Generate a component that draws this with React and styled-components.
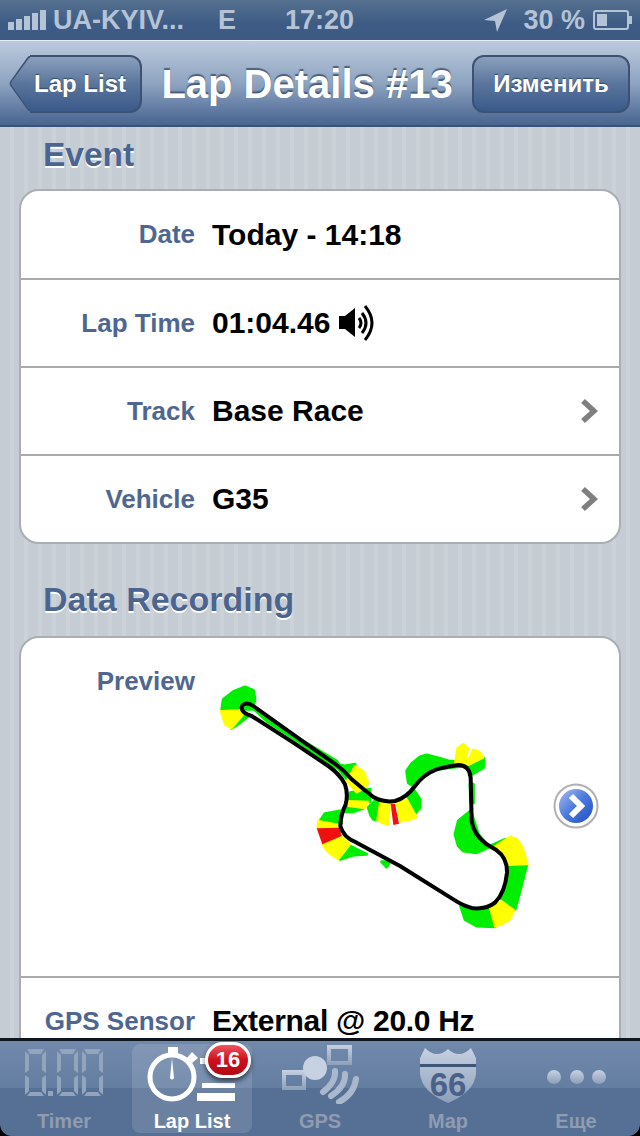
import React from 'react'
import styled, { createGlobalStyle } from 'styled-components'

const Global = createGlobalStyle`
  html, body { margin: 0; padding: 0; background: #000; }
  body { font-family: "Liberation Sans", Arial, sans-serif; }
`

const Shell = styled.div`
  width: 640px;
  height: 1136px;
  display: flex;
  flex-direction: column;
  overflow: hidden;
`

const StatusBar = styled.div`
  height: 40px;
  flex: none;
  display: flex;
  align-items: center;
  padding: 0 7px 0 8px;
  box-sizing: border-box;
  background: linear-gradient(#55708f, #3d5b84 60%, #3c5a82);
  color: #b5c3d6;
  font-size: 27px;
  font-weight: bold;
`

const Signal = styled.div`
  display: flex;
  align-items: flex-end;
  gap: 2px;
  height: 20px;
  margin-right: 7px;
`

const Bar = styled.span`
  width: 6px;
  height: ${p => p.$h}px;
  background: #b5c3d6;
`

const StatusText = styled.span`
  margin-left: ${p => p.$ml || 0}px;
  white-space: nowrap;
`

const Spacer = styled.div`
  flex: 1;
`

const NavBar = styled.div`
  height: 87px;
  flex: none;
  box-sizing: border-box;
  display: flex;
  align-items: center;
  padding: 0 10px;
  border-top: 1px solid #e6ecf3;
  border-bottom: 2px solid #39527a;
  background: linear-gradient(#bccbde, #8ea4c0 50%, #55709a 90%, #4a668f);
`

const NavButtonBody = `
  background: linear-gradient(#8a9fbc, #5a759c 50%, #3a5a8a);
  border: 2px solid #3b5273;
  box-sizing: border-box;
`

const BackButton = styled.div`
  position: relative;
  isolation: isolate;
  width: 132px;
  height: 58px;
  margin-top: 1px;
  display: flex;
  align-items: center;
  justify-content: flex-end;
  padding-right: 16px;
  box-sizing: border-box;
  color: #fff;
  font-size: 24px;
  font-weight: bold;
  text-shadow: 0 -1px 1px rgba(30, 50, 80, 0.7);

  &::before {
    content: '';
    position: absolute;
    z-index: -1;
    left: -1px;
    top: 8px;
    width: 41px;
    height: 41px;
    border-radius: 4px;
    transform: scaleX(0.72) rotate(45deg);
    background: linear-gradient(135deg, #8a9fbc, #5a759c 50%, #3a5a8a);
    border: 2px solid #3b5273;
    box-sizing: border-box;
  }

  &::after {
    content: '';
    position: absolute;
    z-index: -1;
    inset: 0 0 0 20px;
    border-radius: 0 12px 12px 0;
    ${NavButtonBody}
    border-left: 0;
  }
`

const NavTitle = styled.div`
  flex: 1;
  text-align: center;
  padding-top: 2px;
  color: #fff;
  font-size: 40px;
  font-weight: bold;
  white-space: nowrap;
  text-shadow: 0 -2px 1px rgba(50, 70, 100, 0.75);
`

const EditButton = styled.div`
  ${NavButtonBody}
  width: 158px;
  height: 58px;
  margin-top: 1px;
  border-radius: 12px;
  display: flex;
  align-items: center;
  justify-content: center;
  color: #fff;
  font-size: 24px;
  font-weight: bold;
  text-shadow: 0 -1px 1px rgba(30, 50, 80, 0.7);
`

const Content = styled.div`
  flex: 1;
  min-height: 0;
  overflow: hidden;
  padding: 0 19px;
  background: repeating-linear-gradient(90deg, #c5ccd4 0 10px, #cbd2d8 10px 14px);
`

const SectionTitle = styled.div`
  height: 55px;
  line-height: 55px;
  margin: ${p => p.$first ? '0 0 7px' : '28px 0 9px'};
  padding-left: 24px;
  color: #4c6590;
  font-size: ${p => p.$first ? 33.5 : 34}px;
  font-weight: bold;
  text-shadow: 0 2px 0 #fff;
`

const Card = styled.div`
  background: #fff;
  border: 2px solid #aaaeb2;
  border-radius: 20px;
  overflow: hidden;
`

const Row = styled.div`
  height: ${p => p.$h || 88}px;
  box-sizing: border-box;
  display: flex;
  align-items: ${p => p.$top ? 'flex-start' : 'center'};
  border-top: ${p => p.$first ? 'none' : '2px solid #aaa'};
`

const Label = styled.div`
  width: 174px;
  flex: none;
  text-align: right;
  color: #4f6790;
  font-size: 26px;
  font-weight: bold;
  white-space: nowrap;
  padding-top: ${p => p.$pt || 0}px;
`

const Value = styled.div`
  margin-left: 17px;
  flex: 1;
  display: flex;
  align-items: center;
  gap: 9px;
  color: #000;
  font-size: 30px;
  font-weight: bold;
  letter-spacing: ${p => p.$ls || 0}px;
  white-space: nowrap;
`

const Chevron = styled.svg`
  width: 18px;
  height: 26px;
  flex: none;
  margin-right: 21px;
`

const PreviewWrap = styled.div`
  margin: 33px 0 0 5px;
  display: flex;
  flex: none;
`

const InfoButton = styled.svg`
  width: 46px;
  height: 46px;
  flex: none;
  align-self: center;
  margin-left: 3px;
`

const TabBar = styled.div`
  height: 98px;
  flex: none;
  box-sizing: border-box;
  display: grid;
  grid-template-columns: repeat(5, 128px);
  border-top: 3px solid #10161f;
  border-radius: 0 0 12px 12px;
  background: linear-gradient(#7189ab, #647ea2 49%, #566f94 50%, #566f94);
`

const Tab = styled.div`
  position: relative;
  margin: 3px 4px 4px;
  display: flex;
  flex-direction: column;
  align-items: center;
  border-radius: 8px;
  background: ${p => p.$active ? 'rgba(255, 255, 255, 0.13)' : 'transparent'};
`

const TabIcon = styled.svg`
  width: 120px;
  height: 60px;
  flex: none;
`

const TabLabel = styled.div`
  margin-top: 5px;
  color: ${p => p.$active ? '#fff' : '#8f9cb1'};
  font-size: 20px;
  font-weight: bold;
  line-height: 24px;
`

const Badge = styled.div`
  position: absolute;
  top: -2px;
  left: 73px;
  width: 46px;
  height: 36px;
  box-sizing: border-box;
  display: flex;
  align-items: center;
  justify-content: center;
  border: 3px solid #fff;
  border-radius: 18px;
  background: linear-gradient(#ef5560, #cf0f1c 50%, #b00a14);
  box-shadow: 0 3px 5px rgba(0, 0, 0, 0.6);
  color: #fff;
  font-size: 22px;
  font-weight: bold;
`

const ChevronIcon = () => (
  <Chevron viewBox="0 0 18 26">
    <path d="M3 3 L14 13 L3 23" fill="none" stroke="#7f7f7f" strokeWidth="5.5" />
  </Chevron>
)

const Speaker = () => (
  <svg width="36" height="36" viewBox="0 0 36 36">
    <path d="M0 11 H6 L16 3 V32 L6 24 H0 Z" fill="#000" />
    <path d="M20 13 Q24 18 20 23" fill="none" stroke="#000" strokeWidth="3" />
    <path d="M23 8 Q31 18 23 28" fill="none" stroke="#000" strokeWidth="3" />
    <path d="M26 1 Q40 18 26 35" fill="none" stroke="#000" strokeWidth="3" />
  </svg>
)

const GREEN = [
  '70,85 100,62 135,48 160,58 165,85 158,115 130,115 65,118',
  '95,172 130,130 145,135 120,155',
  '160,112 200,135 300,205 410,270 430,300 400,285 300,215 200,150',
  '405,280 435,285 465,280 470,300 445,330',
  '450,365 510,355 510,392 445,388',
  '440,405 490,412 460,422 432,422',
  '530,385 505,410 512,432 520,445 537,447 545,395',
  '625,380 640,355 660,385 660,410 648,425',
  '625,335 620,300 635,278 660,258 680,252 720,262 745,270 770,272 790,285 710,295 670,315 640,345',
  '785,225 800,232 795,278 782,275',
  '805,285 852,262 850,290 815,310',
  '810,340 820,340 820,395 812,390',
  '812,420 775,450 765,490 775,525 790,540 830,545 868,528 835,490',
  '870,525 915,505 905,550',
  '925,582 980,582 965,640 945,715 905,685 920,640',
  '870,712 885,767 830,765 795,745 782,705 830,715',
  '360,450 375,428 420,420 425,455',
  '420,565 450,525 500,550 460,552',
  '545,572 570,572 560,588'
]

const YELLOW = [
  '62,120 120,118 130,130 95,172 75,160',
  '465,285 490,300 505,335 495,350 470,365 440,330',
  '445,390 505,392 495,412 445,405',
  '540,395 570,398 565,460 548,457 532,447',
  '590,395 620,385 650,438 625,448 600,452',
  '765,275 772,232 790,218 805,232 795,278',
  '800,278 820,235 838,242 850,260 805,282',
  '880,530 930,497 950,503 968,530 983,580 925,582 905,550',
  '905,690 943,718 930,745 905,760 885,767 870,710',
  '355,450 420,462 418,470 352,470',
  '367,520 425,497 450,520 415,565 385,545'
]

const RED = [
  '350,472 418,470 425,495 367,520',
  '572,398 585,398 597,458 580,462'
]

const TRACK = `M130 101 Q142 92 160 105 L300 205 L400 275 Q430 295 455 325 Q490 355 520 378
  Q550 395 585 390 Q620 380 645 345 Q670 310 710 295 Q750 285 775 282 Q808 282 812 320
  L815 450 Q820 490 860 520 L890 538 Q922 560 921 605 Q915 665 885 695 Q860 715 820 712
  Q790 705 760 685 L600 585 L470 515 Q430 500 421 465 Q422 430 437 400 Q445 370 435 340
  Q420 310 385 285 L280 215 L155 135 Q125 125 125 110 Q125 105 130 101 Z`

const TrackMap = () => (
  <svg width="350" height="270" viewBox="0 0 1050 810">
    {GREEN.map(p => <polygon key={p} points={p} fill="#00ee00" stroke="#00ee00" strokeWidth="9" strokeLinejoin="round" />)}
    {YELLOW.map(p => <polygon key={p} points={p} fill="#ffff00" stroke="#ffff00" strokeWidth="6" strokeLinejoin="round" />)}
    {RED.map(p => <polygon key={p} points={p} fill="#f01010" />)}
    <path d={TRACK} fill="none" stroke="#000" strokeWidth="12" strokeLinejoin="round" />
  </svg>
)

const Info = () => (
  <InfoButton viewBox="0 0 46 46">
    <defs>
      <linearGradient id="infoBlue" x1="0" y1="0" x2="1" y2="1">
        <stop offset="0" stopColor="#a8bdf0" />
        <stop offset="0.5" stopColor="#4a78dc" />
        <stop offset="1" stopColor="#1f4fc4" />
      </linearGradient>
    </defs>
    <circle cx="23" cy="23" r="21.5" fill="#fff" stroke="#b0b0b4" strokeWidth="2" />
    <circle cx="23" cy="23" r="17" fill="url(#infoBlue)" />
    <path d="M18 13 L28 23 L18 33" fill="none" stroke="#fff" strokeWidth="6" />
  </InfoButton>
)

const ICON_TOP = '#c6d1e1'

const IconGradient = ({ id }) => (
  <defs>
    <linearGradient id={id} x1="0" y1="0" x2="0" y2="1">
      <stop offset="0" stopColor={ICON_TOP} />
      <stop offset="1" stopColor="#8d9fba" />
    </linearGradient>
  </defs>
)

const Digit = ({ x }) => (
  <g transform={`translate(${x} 0)`} fill="#93a4bd">
    <path d="M2 0 H19 L16 5 H5 Z" />
    <path d="M0 2 L4 6 V21 L0 24 Z" />
    <path d="M21 2 L17 6 V21 L21 24 Z" />
    <path d="M0 26 L4 29 V42 L0 46 Z" />
    <path d="M21 26 L17 29 V42 L21 46 Z" />
    <path d="M5 43 H16 L19 47 H2 Z" />
  </g>
)

const TimerIcon = () => (
  <TabIcon viewBox="0 0 120 60">
    <g transform="translate(21 5)">
      <Digit x={0} />
      <rect x="23" y="42" width="5" height="5" fill="#93a4bd" />
      <Digit x={32} />
      <Digit x={57} />
    </g>
  </TabIcon>
)

const LapListIcon = () => (
  <TabIcon viewBox="0 0 120 60">
    <circle cx="40" cy="33" r="22" fill="none" stroke="#fff" strokeWidth="5" />
    <rect x="36" y="3" width="10" height="9" fill="#fff" />
    <path d="M60 8 L66 14 L60 19 L55 14 Z" fill="#fff" />
    <path d="M38 34 L40 14 L42 34 Q40 37 38 34 Z" fill="#fff" />
    <rect x="68" y="14" width="8" height="6" fill="#fff" />
    <rect x="70" y="39" width="33" height="5" fill="#fff" />
    <rect x="65" y="49" width="38" height="8" fill="#fff" />
  </TabIcon>
)

const GpsIcon = () => (
  <TabIcon viewBox="0 0 120 60">
    <IconGradient id="gpsFill" />
    <path fillRule="evenodd" d="M22 26 H46 V46 H22 Z M26 31 V42 H42 V31 Z" fill="url(#gpsFill)" />
    <circle cx="55" cy="24" r="12" fill={ICON_TOP} />
    <path fillRule="evenodd" d="M67 1 H92 V21 H67 Z M71 5 V17 H88 V5 Z" fill="url(#gpsFill)" />
    <g fill="none" stroke="#a9b8cd" strokeWidth="6" strokeLinecap="round">
      <path d="M75 27 Q76 38 63 48" />
      <path d="M85 30 Q86 42 71 52" />
      <path d="M96 35 Q94 50 79 58" />
    </g>
  </TabIcon>
)

const MapIcon = () => (
  <TabIcon viewBox="0 0 120 60">
    <IconGradient id="mapFill" />
    <path d="M37 4 Q43 10 49 10 Q55 10 60 5 Q65 10 71 10 Q77 10 83 4 L88 14 V30 Q86 48 60 59 Q34 48 32 30 V14 Z" fill="url(#mapFill)" />
    <rect x="32" y="20" width="56" height="3" fill="#3f5679" />
    <text x="60" y="52" textAnchor="middle" fontFamily="Liberation Sans, sans-serif" fontWeight="bold" fontSize="33" fill="#4a6288">66</text>
  </TabIcon>
)

const MoreIcon = () => (
  <TabIcon viewBox="0 0 120 60">
    <IconGradient id="moreFill" />
    <circle cx="38" cy="33" r="7" fill="url(#moreFill)" />
    <circle cx="61" cy="33" r="7" fill="url(#moreFill)" />
    <circle cx="83" cy="33" r="7" fill="url(#moreFill)" />
  </TabIcon>
)

export default function App() {
  return (
    <Shell>
      <Global />
      <StatusBar>
        <Signal>
          <Bar $h={8} />
          <Bar $h={11} />
          <Bar $h={14} />
          <Bar $h={17} />
          <Bar $h={20} />
        </Signal>
        <StatusText>UA-KYIV...</StatusText>
        <StatusText $ml={34}>E</StatusText>
        <StatusText $ml={49}>17:20</StatusText>
        <Spacer />
        <svg width="24" height="24" viewBox="0 0 24 24">
          <path d="M23 1 L0 12 L11 13 L13 24 Z" fill="#b5c3d6" />
        </svg>
        <StatusText $ml={15}>30 %</StatusText>
        <svg style={{ marginLeft: 8 }} width="40" height="20" viewBox="0 0 40 20">
          <rect x="1" y="1" width="34" height="18" rx="2" fill="none" stroke="#b5c3d6" strokeWidth="2" />
          <rect x="4" y="4" width="10" height="12" fill="#b5c3d6" />
          <rect x="36" y="6" width="3" height="8" fill="#b5c3d6" />
        </svg>
      </StatusBar>
      <NavBar>
        <BackButton>Lap List</BackButton>
        <NavTitle>Lap Details #13</NavTitle>
        <EditButton>Изменить</EditButton>
      </NavBar>
      <Content>
        <SectionTitle $first>Event</SectionTitle>
        <Card>
          <Row $first $h={87}>
            <Label>Date</Label>
            <Value>Today - 14:18</Value>
          </Row>
          <Row>
            <Label>Lap Time</Label>
            <Value>01:04.46 <Speaker /></Value>
          </Row>
          <Row>
            <Label>Track</Label>
            <Value>Base Race</Value>
            <ChevronIcon />
          </Row>
          <Row>
            <Label>Vehicle</Label>
            <Value>G35</Value>
            <ChevronIcon />
          </Row>
        </Card>
        <SectionTitle>Data Recording</SectionTitle>
        <Card>
          <Row $first $top $h={338}>
            <Label $pt={28}>Preview</Label>
            <PreviewWrap>
              <TrackMap />
              <Info />
            </PreviewWrap>
          </Row>
          <Row>
            <Label>GPS Sensor</Label>
            <Value $ls={-0.3}>External @ 20.0 Hz</Value>
          </Row>
        </Card>
      </Content>
      <TabBar>
        <Tab>
          <TimerIcon />
          <TabLabel>Timer</TabLabel>
        </Tab>
        <Tab $active>
          <LapListIcon />
          <Badge>16</Badge>
          <TabLabel $active>Lap List</TabLabel>
        </Tab>
        <Tab>
          <GpsIcon />
          <TabLabel>GPS</TabLabel>
        </Tab>
        <Tab>
          <MapIcon />
          <TabLabel>Map</TabLabel>
        </Tab>
        <Tab>
          <MoreIcon />
          <TabLabel>Еще</TabLabel>
        </Tab>
      </TabBar>
    </Shell>
  )
}
